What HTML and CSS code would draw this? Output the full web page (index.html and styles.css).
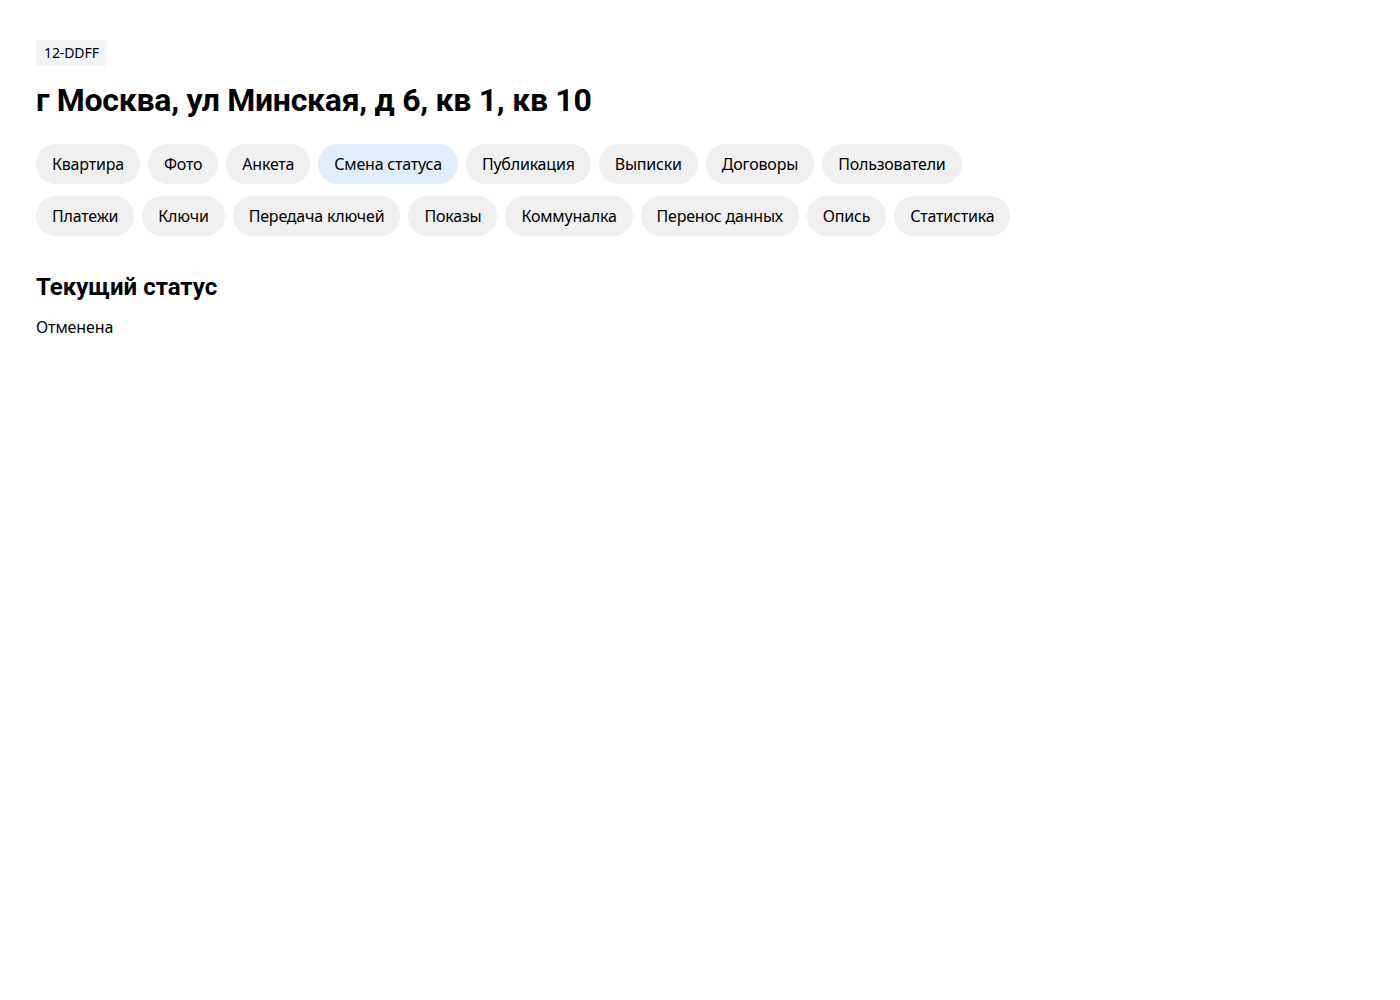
FILE: index.html
```html
<!DOCTYPE html>
<html lang="ru">
<head>
<meta charset="utf-8">
<title>12-DDFF</title>
<link rel="stylesheet" href="styles.css">
</head>
<body>
<main class="page">
  <div class="badge">12-DDFF</div>
  <h1 class="title">г Москва, ул Минская, д 6, кв 1, кв 10</h1>
  <nav class="tabs">
    <div class="tab-row">
      <a class="tab">Квартира</a>
      <a class="tab">Фото</a>
      <a class="tab">Анкета</a>
      <a class="tab tab-active">Смена статуса</a>
      <a class="tab">Публикация</a>
      <a class="tab">Выписки</a>
      <a class="tab">Договоры</a>
      <a class="tab">Пользователи</a>
    </div>
    <div class="tab-row">
      <a class="tab">Платежи</a>
      <a class="tab">Ключи</a>
      <a class="tab">Передача ключей</a>
      <a class="tab">Показы</a>
      <a class="tab">Коммуналка</a>
      <a class="tab">Перенос данных</a>
      <a class="tab">Опись</a>
      <a class="tab">Статистика</a>
    </div>
  </nav>
  <section class="status">
    <h2 class="status-title">Текущий статус</h2>
    <p class="status-value">Отменена</p>
  </section>
</main>
</body>
</html>
```

FILE: styles.css
```css
* { box-sizing: border-box; }
html, body { margin: 0; background: #fff; }
body {
  font-family: "Noto Sans", "Open Sans", sans-serif;
  color: #000;
}
.page {
  padding: 40px 36px;
}
.badge {
  display: inline-block;
  height: 26px;
  line-height: 26px;
  padding: 0 8px;
  background: #f3f3f5;
  border-radius: 4px;
  font-size: 14px;
  letter-spacing: -0.1px;
}
.title {
  margin: 15px 0 0;
  font-family: Roboto, "Noto Sans", sans-serif;
  font-size: 32px;
  line-height: 38px;
  font-weight: 700;
  letter-spacing: -0.27px;
}
.tabs {
  margin-top: 25px;
  display: flex;
  flex-direction: column;
  gap: 12px;
}
.tab-row {
  display: flex;
  gap: 8px;
}
.tab {
  display: inline-flex;
  align-items: center;
  height: 40px;
  padding: 0 16px;
  border-radius: 20px;
  background: #f0f0f0;
  font-size: 16px;
  letter-spacing: -0.2px;
  color: #000;
  cursor: pointer;
}
.tab-active {
  background: #e0edfb;
}
.status {
  margin-top: 36px;
}
.status-title {
  margin: 0;
  font-family: Roboto, "Noto Sans", sans-serif;
  font-size: 24px;
  line-height: 30px;
  font-weight: 700;
}
.status-value {
  margin: 14px 0 0;
  font-size: 16px;
  line-height: 22px;
  letter-spacing: -0.1px;
}
```
